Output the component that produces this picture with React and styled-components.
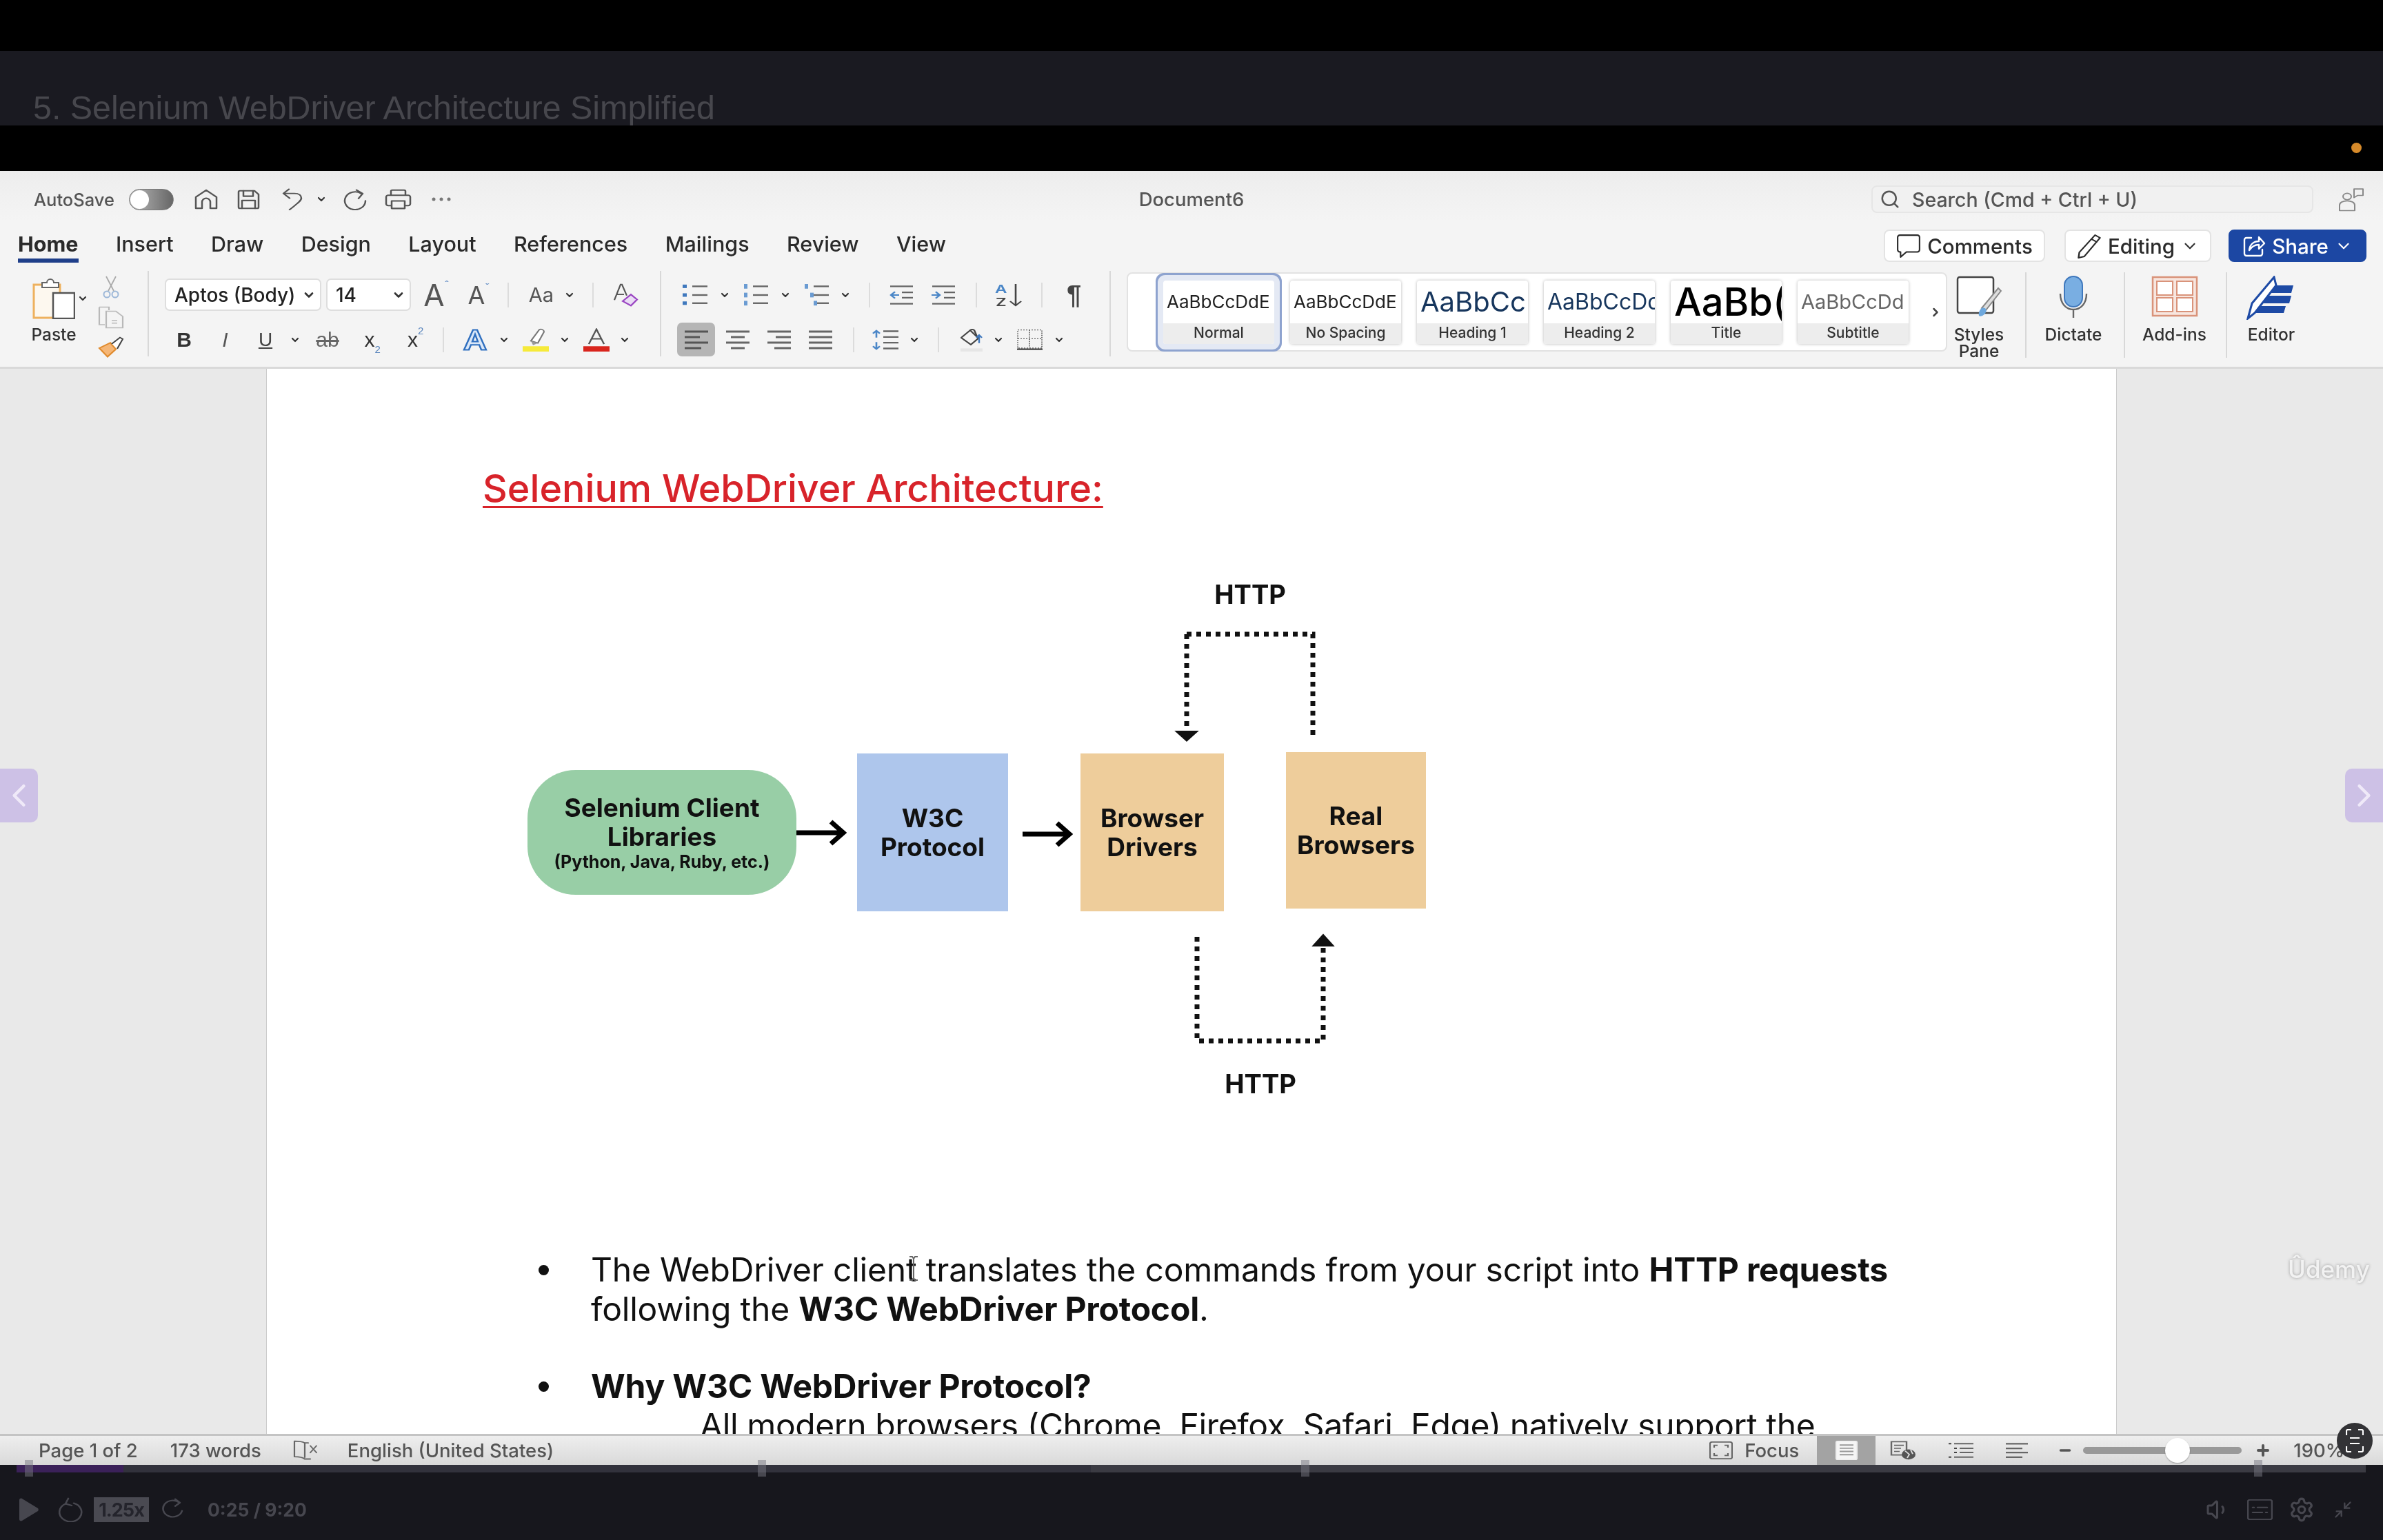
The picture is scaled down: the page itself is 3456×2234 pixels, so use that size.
import React from "react";
import styled, { createGlobalStyle } from "styled-components";
import { ChevronDown, ChevronRight, ChevronLeft, Search, Volume1, Settings, Minimize2, Minus, Plus } from "lucide-react";

const Global = createGlobalStyle`
  html, body { margin: 0; padding: 0; background: #000; }
  * { box-sizing: border-box; }
`;
const font = `Inter, "Liberation Sans", sans-serif`;

const App_ = styled.div`
  position: relative; width: 3456px; height: 2234px; overflow: hidden; background: #000;
  font-family: ${font}; display: flex; flex-direction: column; filter: blur(0.7px);
`;
const TopBlack = styled.div`height: 74px; background: #000; flex: none;`;
const TitleBar = styled.div`
  height: 108px; flex: none; background: #1a1a21; color: #47474d; font-size: 48.4px; padding: 56px 0 0 48px;
  line-height: 52px; font-family: "Liberation Sans", sans-serif; overflow: hidden; white-space: nowrap;
`;
const BlackBand = styled.div`height: 66px; flex: none; background: #000; position: relative;`;
const RecDot = styled.div`position: absolute; right: 31px; top: 25px; width: 15px; height: 15px; border-radius: 50%; background: #d68a2a;`;
const Word = styled.div`height: 1877px; flex: none; display: flex; flex-direction: column; background: #e9e9e9;`;
const Ribbon = styled.div`
  height: 287px; flex: none; background: linear-gradient(#ededed, #f4f4f4 25%); border-bottom: 3px solid #d9d9d9;
  display: flex; flex-direction: column; color: #333;
`;
const QuickRow = styled.div`height: 82px; flex: none; display: grid; grid-template-columns: 1fr auto 1fr; align-items: center;`;
const QuickLeft = styled.div`display: flex; align-items: center;`;
const QuickRight = styled.div`display: flex; align-items: center; justify-content: flex-end; padding-right: 26px;`;
const Slot = styled.span`
  display: inline-flex; align-items: center; justify-content: center; flex: none;
  width: ${p => p.$w}px; margin-left: ${p => p.$ml || 0}px; color: ${p => p.$c || "#555"};
`;
const AutoSave = styled.span`margin-left: 49px; font-size: 25.5px; color: #555; font-weight: 500; width: 116px; flex: none; white-space: nowrap;`;
const Toggle = styled.span`
  margin-left: 22px; width: 65px; height: 31px; border-radius: 16px; background: linear-gradient(90deg, #bbb, #666);
  flex: none; position: relative; display: block; border: 1px solid #777;
`;
const ToggleKnob = styled.span`position: absolute; left: 1px; top: 1px; width: 27px; height: 27px; border-radius: 50%; background: #fff;`;
const DocTitle = styled.div`font-size: 27.5px; color: #555; font-weight: 500;`;
const SearchBox = styled.div`
  width: 641px; height: 40px; background: #f1f1f1; border: 2px solid #e6e6e6; border-radius: 8px; display: flex; align-items: center;
  padding-left: 10px; gap: 17px; color: #555; font-size: 28.5px; font-weight: 500; white-space: nowrap;
`;
const TabRow = styled.div`height: 55px; flex: none; display: flex; align-items: flex-start; padding: 6px 24px 0 26px;`;
const Tabs = styled.div`display: flex; gap: 54.4px;`;
const Tab = styled.div`
  font-size: 30.5px; line-height: 36px; padding-bottom: 3px; color: #2a2a2a; font-weight: ${p => p.$on ? 700 : 500};
  border-bottom: 6px solid ${p => p.$on ? "#1f3f8a" : "transparent"}; white-space: nowrap;
`;
const RightBtns = styled.div`margin-left: auto; margin-top: -3px; display: flex;`;
const PillBtn = styled.div`
  width: ${p => p.$w}px; height: 47px; margin-left: ${p => p.$ml || 0}px; border-radius: 8px; display: flex; align-items: center; justify-content: center; gap: 9px;
  background: ${p => p.$blue ? "#1c47a3" : "#fff"}; color: ${p => p.$blue ? "#fff" : "#2a2a2a"};
  border: 2px solid ${p => p.$blue ? "#1c47a3" : "#e3e3e3"}; font-size: 29.5px; font-weight: 500;
`;
const Tools = styled.div`height: 127px; margin-top: 8px; flex: none; display: flex;`;
const GroupSep = styled.div`width: 2px; flex: none; background: #d8d8d8; height: 124px;`;
const PasteGroup = styled.div`width: 214px; flex: none; display: flex;`;
const PasteCol = styled.div`margin-left: 40px; width: 76px; display: flex; flex-direction: column; align-items: center; padding-top: 10px;`;
const PasteLabel = styled.div`font-size: 24.5px; line-height: 24px; margin-top: 10px; font-weight: 500; color: #333;`;
const PasteChev = styled.span`margin-left: -4px; width: 16px; height: 60px; margin-top: 10px; display: flex; align-items: center; justify-content: center; flex: none;`;
const ClipCol = styled.div`margin-left: 13px; display: flex; flex-direction: column; gap: 11px; padding-top: 7px; align-items: center; width: 39px;`;
const ToolGroup = styled.div`width: ${p => p.$w}px; flex: none; display: flex; flex-direction: column;`;
const ToolRow = styled.div`display: flex; align-items: center; height: 47px; margin-top: ${p => p.$mt || 11}px;`;
const MiniSep = styled.span`width: 2px; height: 36px; background: #dcdcdc; flex: none; margin-left: ${p => p.$ml}px;`;
const Select = styled.div`
  width: ${p => p.$w}px; height: 47px; margin-left: ${p => p.$ml}px; background: #fff; border: 2px solid #dedede; border-radius: 7px;
  display: flex; align-items: center; justify-content: space-between; padding: 0 6px 0 12px; font-size: 28px; color: #222; flex: none; font-weight: 500; white-space: nowrap;
`;
const GlyphA = styled.span`font-size: ${p => p.$s}px; color: #555; line-height: 1; position: relative; font-weight: 400;`;
const Sup = styled.span`position: absolute; left: 100%; top: 0; font-size: 14px; color: #6b93c8; font-weight: 700;`;
const Fmt = styled.span`
  font-size: ${p => p.$s || 28}px; color: ${p => p.$c || "#333"}; line-height: 1; font-family: "Liberation Sans", sans-serif;
  font-weight: ${p => p.$b ? 700 : 400}; font-style: ${p => p.$i ? "italic" : "normal"};
  text-decoration: ${p => p.$d || "none"}; position: relative;
`;
const Sub = styled.span`font-size: 15px; color: #5b86bd; position: absolute; left: 100%; ${p => p.$up ? "top:-6px;" : "bottom:-6px;"}`;
const ActiveBtn = styled.span`
  display: inline-flex; align-items: center; justify-content: center; flex: none; width: 55px; height: 49px; margin-left: ${p => p.$ml}px;
  background: #b5b5b5; border-radius: 7px;
`;
const Gallery = styled.div`
  margin-left: 23px; width: 1190px; height: 115px; margin-top: 2px; background: #fff; border: 2px solid #e2e2e2; border-radius: 8px; display: flex; align-items: center;
  padding-left: 51px; flex: none;
`;
const StyleCard = styled.div`
  width: 161px; height: 92px; margin-right: 23px; flex: none; border-radius: 4px; overflow: hidden; display: flex; flex-direction: column; background: #fff;
  box-shadow: ${p => p.$sel ? "0 0 0 8px #e4e9f4, 0 0 0 11px #8ea3cf" : "0 0 4px rgba(0,0,0,.28)"};
`;
const Preview = styled.div`
  flex: 1; display: flex; align-items: center; padding-left: 5px; overflow: hidden; white-space: nowrap;
  font-size: ${p => p.$s}px; color: ${p => p.$c || "#222"}; font-weight: ${p => p.$w || 400};
`;
const PreviewLabel = styled.div`height: 30px; background: #ededed; text-align: center; font-size: 21px; line-height: 28px; color: #333; font-weight: 500;`;
const GalleryMore = styled.div`margin-left: 6px; color: #444; display: flex;`;
const BigBtn = styled.div`width: ${p => p.$w}px; margin-left: ${p => p.$ml || 0}px; flex: none; display: flex; flex-direction: column; align-items: center; padding-top: 7px;`;
const BigIcon = styled.div`height: 60px; display: flex; justify-content: center;`;
const BigLabel = styled.div`margin-top: 13px; font-size: 24.5px; line-height: 24px; text-align: center; color: #333; font-weight: 500;`;
const Doc = styled.div`flex: 1; min-height: 0; overflow: hidden; display: flex; justify-content: center; background: #e9e9e9;`;
const Page = styled.div`width: 2684px; height: 100%; flex: none; background: #fff; border-left: 1px solid #ccc; border-right: 1px solid #ccc; padding-top: 138px; color: #111;`;
const Heading = styled.div`
  margin-left: 313px; font-size: 55.5px; line-height: 70px; color: #d8232a; font-weight: 500; text-decoration: underline; text-decoration-thickness: 3px; text-underline-offset: 6px; white-space: nowrap;
`;
const Canvas = styled.div`position: relative; height: 1070px;`;
const Node = styled.div`
  position: absolute; left: ${p => p.$x}px; top: ${p => p.$y}px; width: ${p => p.$w}px; height: ${p => p.$h}px; background: ${p => p.$bg};
  border-radius: ${p => p.$r || 0}px; display: flex; flex-direction: column; align-items: center; justify-content: center; text-align: center;
  font-size: 37px; font-weight: 700; line-height: 42px; color: #111;
`;
const NodeSmall = styled.div`font-size: 25px; line-height: 30px;`;
const HttpLabel = styled.div`position: absolute; left: ${p => p.$x}px; top: ${p => p.$y}px; transform: translate(-50%, -50%); font-size: 38px; font-weight: 700; color: #111;`;
const Lines = styled.svg`position: absolute; left: 0; top: 0; width: 2684px; height: 1070px;`;
const List = styled.div`padding-left: 470px; font-size: 48px; line-height: 57px; letter-spacing: -0.2px; color: #111;`;
const Item = styled.div`
  position: relative; margin-bottom: ${p => p.$mb || 0}px; white-space: nowrap;
  &::before { content: ""; position: absolute; left: -76px; top: 22px; width: 15px; height: 15px; border-radius: 50%; background: #111; }
`;
const SubLine = styled.div`padding-left: 158px; white-space: nowrap; letter-spacing: -0.4px;`;
const Status = styled.div`
  height: 45px; flex: none; background: linear-gradient(#eee, #d9d9d9); border-top: 3px solid #c4c4c4; display: flex; align-items: center; color: #555; font-size: 27.5px; font-weight: 500; position: relative;
`;
const StatusText = styled.span`margin-left: ${p => p.$ml}px; white-space: nowrap; flex: none;`;
const ViewActive = styled.span`
  margin-left: ${p => p.$ml}px; width: 85px; height: 42px; background: #a3a3a3; display: flex; align-items: center; justify-content: center; flex: none;
`;
const SliderTrack = styled.div`margin-left: ${p => p.$ml}px; width: 230px; height: 10px; border-radius: 5px; background: #999; position: relative; flex: none;`;
const SliderThumb = styled.div`position: absolute; left: 119px; top: -13px; width: 36px; height: 36px; border-radius: 50%; background: #fff; box-shadow: 0 1px 2px rgba(0,0,0,.3);`;
const ProgressWrap = styled.div`height: 11px; flex: none; background: #17171d; padding: 0 24px; display: flex;`;
const ProgressFill = styled.div`width: 155px; background: #3b2159;`;
const ProgressRest = styled.div`width: ${p => p.$w}px; background: ${p => p.$c};`;
const Tick = styled.div`position: absolute; left: ${p => p.$x}px; top: 2118px; width: 12px; height: 24px; background: rgba(120,120,130,.5);`;
const Player = styled.div`flex: 1; background: #17171d; display: flex; align-items: center; padding-top: 10px; color: #47474f;`;
const Speed = styled.div`margin-left: 15px; width: 80px; height: 36px; background: #4a4a52; color: #24242c; font-size: 27px; font-weight: 700; display: flex; align-items: center; justify-content: center; letter-spacing: -1px;`;
const Time = styled.div`margin-left: 35px; font-size: 26.5px; font-weight: 700; color: #47474f;`;
const PlayerRight = styled.div`margin-left: auto; display: flex; align-items: center; padding-right: 44px;`;
const SideArrow = styled.div`
  position: absolute; top: 1115px; width: 55px; height: 78px; background: #cdc1e6; display: flex; align-items: center; justify-content: center; color: #efe9f8;
  ${p => p.$right ? "right: 0; border-radius: 10px 0 0 10px;" : "left: 0; border-radius: 0 10px 10px 0;"}
`;
const Watermark = styled.div`position: absolute; left: 3318px; top: 1818px; font-size: 35px; font-weight: 500; color: #f2f2f2; text-shadow: 0 0 4px #999; line-height: 46px;`;
const Badge = styled.div`position: absolute; left: 3389px; top: 2064px; width: 52px; height: 52px; border-radius: 50%; background: #333336; display: flex; align-items: center; justify-content: center;`;
const Cursor = styled.svg`position: absolute; left: 1318px; top: 1822px;`;

const Chev = ({ s = 20, c = "#333", w = 3.2 }) => <ChevronDown size={s} color={c} strokeWidth={w} />;
const S = (p) => <svg fill="none" stroke="currentColor" strokeWidth="2.5" strokeLinecap="round" strokeLinejoin="round" preserveAspectRatio="none" {...p} />;

const Home = () => <S width="36" height="30" viewBox="0 0 36 33"><path d="M3 31V13L18 2l15 11v18h-9V21a6 6 0 0 0-12 0v10z" /></S>;
const Save = () => <S width="33" height="29" viewBox="0 0 33 33"><path d="M2 4a2 2 0 0 1 2-2h21l6 6v21a2 2 0 0 1-2 2H4a2 2 0 0 1-2-2z" /><path d="M9 2v9h14V2M7 31V18h19v13" /></S>;
const Undo = () => <S width="32" height="32" viewBox="0 0 32 42"><path d="M11 2 3 10l9 9M3 10h16c7 0 10 4 10 9 0 6-10 14-17 22" /></S>;
const Redo = () => <S width="34" height="31" viewBox="0 0 34 36"><path d="M26 8A15 15 0 1 0 32 20M19 2l9 6-6 8" /></S>;
const Printer = () => <S width="39" height="30" viewBox="0 0 39 36"><path d="M9 11V4a2 2 0 0 1 2-2h17a2 2 0 0 1 2 2v7M9 29H5a3 3 0 0 1-3-3V14a3 3 0 0 1 3-3h29a3 3 0 0 1 3 3v12a3 3 0 0 1-3 3h-4" /><path d="M10 21h19v13H10z" /></S>;
const Dots = () => <svg width="30" height="8" viewBox="0 0 30 8" fill="#777"><circle cx="4" cy="4" r="2.5" /><circle cx="15" cy="4" r="2.5" /><circle cx="26" cy="4" r="2.5" /></svg>;
const Person = () => <S width="40" height="36" viewBox="0 0 40 46" stroke="#888" strokeWidth="2"><circle cx="14" cy="18" r="6" /><path d="M3 44V34c0-5 5-8 11-8s11 3 11 8v10z" /><path d="M24 4h13v12h-8l-5 4z" /></S>;
const Comment = () => <S width="36" height="36" viewBox="0 0 34 34" strokeWidth="2"><path d="M5 2h24a3 3 0 0 1 3 3v17a3 3 0 0 1-3 3H14l-8 7v-7H5a3 3 0 0 1-3-3V5a3 3 0 0 1 3-3z" /></S>;
const Pencil = () => <S width="36" height="36" viewBox="0 0 30 36" strokeWidth="2"><path d="M22 2l6 4L9 33l-7 2 1-8zM18 8l6 4" /></S>;
const ShareIc = () => <S width="34" height="34" viewBox="0 0 34 34" strokeWidth="2.4"><path d="M13 5H6a3 3 0 0 0-3 3v20a3 3 0 0 0 3 3h20a3 3 0 0 0 3-3v-6" /><path d="M10 23c1-9 7-13 14-13V4l8 9-8 8v-6c-6 0-10 2-14 8z" /></S>;

const PasteIc = () => <svg width="62" height="60" viewBox="0 0 62 60" fill="none"><path d="M12 10h28v48H2V10z" stroke="#eeb15e" strokeWidth="3" fill="#fdf8ef" /><path d="M14 14V7h7a5 5 0 0 1 10 0h7v7z" stroke="#666" strokeWidth="2" fill="#fff" /><rect x="30" y="22" width="31" height="37" fill="#fff" stroke="#555" strokeWidth="2.5" /></svg>;
const ScissorsIc = () => <svg width="26" height="33" viewBox="0 0 26 33" fill="none"><path d="M6 1 17 22M20 1 9 22" stroke="#aaa" strokeWidth="1.8" /><circle cx="7" cy="27" r="4.5" stroke="#9db8d8" strokeWidth="2" /><circle cx="19" cy="27" r="4.5" stroke="#9db8d8" strokeWidth="2" /></svg>;
const CopyIc = () => <svg width="38" height="33" viewBox="0 0 38 44" fill="none" stroke="#b9b9b9" strokeWidth="2.2" preserveAspectRatio="none"><path d="M2 2h14v6M10 36H2V2" /><path d="M12 10h14l10 10v22H12z" /><path d="M20 28h8M20 33h8" /></svg>;
const BrushIc = () => <svg width="38" height="31" viewBox="0 0 38 40" fill="none" preserveAspectRatio="none"><path d="M2 22 18 12l8 12-12 14z" fill="#f5b676" stroke="#e08b2e" strokeWidth="2.4" /><path d="M20 14 32 2l4 3-8 18" fill="#fff" stroke="#444" strokeWidth="2.2" /></svg>;
const Eraser = () => <svg width="37" height="34" viewBox="0 0 37 42" fill="none" preserveAspectRatio="none"><path d="M2 30 11 2h2l7 20M5 20h11" stroke="#555" strokeWidth="2.2" /><path d="M14 32l12-12 9 9-9 11z" fill="#eadcf5" stroke="#9a45c2" strokeWidth="2.4" /></svg>;
const BlueA = () => <svg width="36" height="32" viewBox="0 0 36 40" preserveAspectRatio="none"><path d="M2 38 15 2h6l13 36h-7l-3-9H12l-3 9zM14 23h8l-4-13z" fill="#dbe8f8" stroke="#2f6fbf" strokeWidth="2.5" /></svg>;
const Marker = () => <svg width="38" height="34" viewBox="0 0 38 44" fill="none" preserveAspectRatio="none"><path d="M12 24 24 3c3-2 7 0 7 4L22 28z" stroke="#777" strokeWidth="2.2" fill="#fff" /><path d="M12 24l10 4-7 4z" fill="#999" /><rect x="0" y="34" width="38" height="10" fill="#f6ea3a" /></svg>;
const FontColorIc = () => <svg width="38" height="34" viewBox="0 0 38 44" fill="none" preserveAspectRatio="none"><path d="M8 30 19 2l11 28M12 20h14" stroke="#555" strokeWidth="2.4" /><rect x="0" y="34" width="38" height="10" fill="#d9251d" /></svg>;
const BulletList = ({ kind }) => {
  const lines = [4, 19, 33];
  return <svg width="36" height="32" viewBox="0 0 36 38" fill="none" preserveAspectRatio="none">
    {lines.map((y, i) => <path key={i} d={`M14 ${y}H36`} stroke="#666" strokeWidth="2.8" />)}
    {kind === "b" && lines.map((y, i) => <rect key={i} x="0" y={y - 3} width="6" height="6" fill="#3f78bd" />)}
    {kind === "n" && lines.map((y, i) => <rect key={i} x="1" y={y - 4} width="5" height="8" fill="#6a9bd2" />)}
    {kind === "m" && [[1, 4], [9, 19], [14, 33]].map(([x, y], i) => <rect key={i} x={x} y={y - 4} width="5" height="8" fill="#6a9bd2" />)}
  </svg>;
};
const IndentIc = ({ out }) => <svg width="34" height="30" viewBox="0 0 34 38" fill="none" preserveAspectRatio="none"><path d="M1 3h33M1 35h33M18 14h16M18 24h16" stroke="#666" strokeWidth="2.8" /><path d={out ? "M14 19H2M8 13l-6 6 6 6" : "M0 19h12M6 13l6 6-6 6"} stroke="#4a86c7" strokeWidth="2.6" /></svg>;
const SortIc = () => <svg width="39" height="36" viewBox="0 0 39 52" fill="none" preserveAspectRatio="none"><text x="0" y="22" fontSize="24" fontWeight="600" fill="#4a86c7" fontFamily="Inter">A</text><text x="1" y="49" fontSize="24" fontWeight="600" fill="#444" fontFamily="Inter">Z</text><path d="M30 3v45M22 39l8 9 8-9" stroke="#444" strokeWidth="2.6" /></svg>;
const AlignIc = ({ a, dark }) => {
  const c = dark ? "#555" : "#666";
  const rows = a === "l" ? [[0, 34], [0, 22], [0, 34], [0, 24]] : a === "c" ? [[0, 34], [7, 20], [0, 34], [7, 20]] : a === "r" ? [[0, 34], [12, 22], [0, 34], [10, 24]] : [[0, 34], [0, 34], [0, 34], [0, 34]];
  return <svg width="34" height="30" viewBox="0 0 34 30" fill="none">{rows.map(([x, w], i) => <path key={i} d={`M${x} ${3 + i * 8}h${w}`} stroke={c} strokeWidth="3" />)}</svg>;
};
const LineSp = () => <svg width="38" height="30" viewBox="0 0 38 36" fill="none" preserveAspectRatio="none"><path d="M16 3h22M16 13h22M16 23h22M16 33h22" stroke="#666" strokeWidth="2.8" /><path d="M6 14V2M1 7l5-5 5 5M6 22v12M1 29l5 5 5-5" stroke="#4a86c7" strokeWidth="2.6" /></svg>;
const FillIc = () => <svg width="32" height="34" viewBox="0 0 32 44" fill="none" preserveAspectRatio="none"><path d="M1 18 14 4l12 15-11 12z" stroke="#444" strokeWidth="2.4" /><path d="M14 4c2-2 4-2 6 0l4 12" stroke="#444" strokeWidth="2.4" /><path d="M27 28V14M23 18l4-5 4 5" stroke="#3f78bd" strokeWidth="2.4" /><rect x="0" y="38" width="32" height="6" fill="#e6e6e6" /></svg>;
const Borders = () => <svg width="37" height="32" viewBox="0 0 37 40" fill="none" preserveAspectRatio="none"><path d="M1 2h35v33H1zM18 2v33M1 18h35" stroke="#666" strokeWidth="1.8" strokeDasharray="2 2" /><path d="M0 37h37" stroke="#444" strokeWidth="3" /></svg>;
const StylesPaneIc = () => <svg width="68" height="62" viewBox="0 0 68 62" fill="none"><path d="M6 2h46a3 3 0 0 1 3 3v46a3 3 0 0 1-3 3H6a3 3 0 0 1-3-3V5a3 3 0 0 1 3-3z" stroke="#444" strokeWidth="2.5" fill="#fff" /><path d="M66 22 44 50l-6-3 24-29z" fill="#ddd" stroke="#888" strokeWidth="2" /><path d="M38 47c5-2 8 2 6 6s-7 7-10 5c-1-4 1-9 4-11z" fill="#6ea8dd" /></svg>;
const MicIc = () => <svg width="42" height="62" viewBox="0 0 42 62" fill="none"><rect x="8" y="1" width="26" height="44" rx="13" fill="#79aee2" stroke="#3f78bd" strokeWidth="2" /><path d="M2 26c0 14 8 23 19 23s19-9 19-23M21 49v12" stroke="#666" strokeWidth="2.4" /></svg>;
const AddinsIc = () => <svg width="68" height="60" viewBox="0 0 68 60" fill="none"><rect x="2" y="2" width="64" height="56" fill="#f7e6df" stroke="#d9937a" strokeWidth="2.5" /><rect x="8" y="8" width="23" height="20" fill="#fff" stroke="#d9937a" strokeWidth="2" /><rect x="37" y="8" width="23" height="20" fill="#fff" stroke="#d9937a" strokeWidth="2" /><rect x="8" y="32" width="23" height="20" fill="#fff" stroke="#d9937a" strokeWidth="2" /><rect x="37" y="32" width="23" height="20" fill="#fff" stroke="#d9937a" strokeWidth="2" /></svg>;
const EditorIc = () => <svg width="72" height="64" viewBox="0 0 72 64" fill="none"><path d="M2 62 8 40 40 2l3 12-31 40z" fill="#fff" stroke="#1d4aa5" strokeWidth="3" /><path d="M42 14h26l-3 11H33zM31 29h34l-3 11H21zM19 44h38l-3 10H11z" fill="#1d4aa5" /></svg>;
const BookX = () => <S width="38" height="30" viewBox="0 0 38 36" strokeWidth="2.2" stroke="#666"><path d="M18 30V5c-3-2-8-3-15-3v27c7 0 12 1 15 4h8M18 5h5" /><path d="M26 10l9 12M35 10l-9 12" strokeWidth="2" /></S>;
const FocusIc = () => <svg width="34" height="26" viewBox="0 0 34 32" fill="none" stroke="#666" strokeWidth="2.2" preserveAspectRatio="none"><rect x="1" y="1" width="32" height="30" rx="3" /><path d="M7 11V7h5M27 11V7h-5M7 21v4h5M27 21v4h-5" /></svg>;
const PrintLayout = () => <svg width="32" height="28" viewBox="0 0 32 36" fill="none" preserveAspectRatio="none"><rect x="1" y="1" width="30" height="34" rx="2" fill="#f5f5f5" stroke="#eee" strokeWidth="2" /><path d="M6 8h20M6 14h20M6 20h20M6 26h20" stroke="#999" strokeWidth="2.4" /></svg>;
const WebIc = () => <svg width="38" height="28" viewBox="0 0 38 38" fill="none" preserveAspectRatio="none"><path d="M2 2h22v26H2z" stroke="#666" strokeWidth="2.4" /><path d="M6 9h14M6 15h10M6 21h8" stroke="#666" strokeWidth="2.2" /><circle cx="27" cy="27" r="10" fill="#555" /><path d="M22 20l6 7-3 7M30 18l3 8" stroke="#ddd" strokeWidth="2" /></svg>;
const OutlineIc = () => <svg width="36" height="24" viewBox="0 0 36 32" fill="none" preserveAspectRatio="none"><path d="M8 3h28M16 12h20M16 20h20M8 29h28" stroke="#666" strokeWidth="2.8" /><path d="M0 3h4M8 12h4M8 20h4M0 29h4" stroke="#444" strokeWidth="2.8" /></svg>;
const DraftIc = () => <svg width="32" height="24" viewBox="0 0 32 32" fill="none" preserveAspectRatio="none"><path d="M0 3h32M0 12h24M0 20h32M0 29h24" stroke="#666" strokeWidth="3" /></svg>;
const ScanIc = () => <svg width="26" height="34" viewBox="0 0 26 34" fill="none" stroke="#fff" strokeWidth="2.2"><path d="M1 9V3a2 2 0 0 1 2-2h5M25 9V3a2 2 0 0 0-2-2h-5M1 25v6a2 2 0 0 0 2 2h5M25 25v6a2 2 0 0 1-2 2h-5M6 13h14M6 21h14" /></svg>;
const PlayIc = () => <svg width="28" height="34" viewBox="0 0 28 34" fill="#47474f"><path d="M0 3c0-2 2-3 4-2l23 14c1 1 1 3 0 4L4 33c-2 1-4 0-4-2z" /></svg>;
const BackIc = () => <S width="36" height="36" viewBox="0 0 36 42" stroke="#47474f" strokeWidth="2.6"><path d="M14 2 10 11l9 3" /><path d="M10 11a16 16 0 1 0 12-1" /></S>;
const FwdIc = () => <S width="32" height="34" viewBox="0 0 32 40" stroke="#47474f" strokeWidth="2.6"><path d="M26 8A14 14 0 1 0 30 22M20 2l7 6-7 6" /></S>;
const CaptionIc = () => <S width="37" height="30" viewBox="0 0 37 38" stroke="#47474f" strokeWidth="2.6"><rect x="1" y="1" width="35" height="36" rx="3" /><path d="M8 15h2M15 15h14M8 24h14M27 24h2" /></S>;

export default function App() {
  return (
    <App_>
      <Global />
      <TopBlack />
      <TitleBar>5. Selenium WebDriver Architecture Simplified</TitleBar>
      <BlackBand><RecDot /></BlackBand>
      <Word>
        <Ribbon>
          <QuickRow>
            <QuickLeft>
              <AutoSave>AutoSave</AutoSave>
              <Toggle><ToggleKnob /></Toggle>
              <Slot $w={36} $ml={29}><Home /></Slot>
              <Slot $w={33} $ml={27}><Save /></Slot>
              <Slot $w={32} $ml={31}><Undo /></Slot>
              <Slot $w={16} $ml={18}><Chev s={18} /></Slot>
              <Slot $w={34} $ml={24}><Redo /></Slot>
              <Slot $w={39} $ml={26}><Printer /></Slot>
              <Slot $w={30} $ml={28}><Dots /></Slot>
            </QuickLeft>
            <DocTitle>Document6</DocTitle>
            <QuickRight>
              <SearchBox><Search size={30} color="#555" strokeWidth={2} />Search (Cmd + Ctrl + U)</SearchBox>
              <Slot $w={40} $ml={35}><Person /></Slot>
            </QuickRight>
          </QuickRow>
          <TabRow>
            <Tabs>
              <Tab $on>Home</Tab><Tab>Insert</Tab><Tab>Draw</Tab><Tab>Design</Tab><Tab>Layout</Tab><Tab>References</Tab><Tab>Mailings</Tab><Tab>Review</Tab><Tab>View</Tab>
            </Tabs>
            <RightBtns>
              <PillBtn $w={234}><Comment />Comments</PillBtn>
              <PillBtn $w={213} $ml={28}><Pencil />Editing<Chev s={26} w={2} /></PillBtn>
              <PillBtn $w={200} $ml={25} $blue><ShareIc />Share<Chev s={26} w={2} c="#fff" /></PillBtn>
            </RightBtns>
          </TabRow>
          <Tools>
            <PasteGroup>
              <PasteCol><PasteIc /><PasteLabel>Paste</PasteLabel></PasteCol>
              <PasteChev><Chev /></PasteChev>
              <ClipCol>
                <ScissorsIc />
                <CopyIc />
                <BrushIc />
              </ClipCol>
            </PasteGroup>
            <GroupSep />
            <ToolGroup $w={741}>
              <ToolRow>
                <Select $w={227} $ml={23}>Aptos (Body)<Chev /></Select>
                <Select $w={123} $ml={7}>14<Chev /></Select>
                <Slot $w={33} $ml={17}><GlyphA $s={44}>A<Sup>ˆ</Sup></GlyphA></Slot>
                <Slot $w={30} $ml={30}><GlyphA $s={36}>A<Sup>ˇ</Sup></GlyphA></Slot>
                <MiniSep $ml={30} />
                <Slot $w={38} $ml={28}><GlyphA $s={29}>Aa</GlyphA></Slot>
                <Slot $w={16} $ml={14}><Chev /></Slot>
                <MiniSep $ml={25} />
                <Slot $w={37} $ml={28}><Eraser /></Slot>
              </ToolRow>
              <ToolRow $mt={18}>
                <Slot $w={20} $ml={41}><Fmt $b $s={30}>B</Fmt></Slot>
                <Slot $w={15} $ml={42}><Fmt $i $s={30} $c="#555">I</Fmt></Slot>
                <Slot $w={22} $ml={40}><Fmt $d="underline" $s={28} $c="#444">U</Fmt></Slot>
                <Slot $w={16} $ml={24}><Chev /></Slot>
                <Slot $w={36} $ml={21}><Fmt $d="line-through" $s={30} $c="#666">ab</Fmt></Slot>
                <Slot $w={20} $ml={33}><Fmt $s={30}>x<Sub>2</Sub></Fmt></Slot>
                <Slot $w={25} $ml={40}><Fmt $s={30}>x<Sub $up>2</Sub></Fmt></Slot>
                <MiniSep $ml={31} />
                <Slot $w={36} $ml={27}><BlueA /></Slot>
                <Slot $w={16} $ml={16}><Chev /></Slot>
                <Slot $w={38} $ml={19}><Marker /></Slot>
                <Slot $w={16} $ml={15}><Chev /></Slot>
                <Slot $w={38} $ml={19}><FontColorIc /></Slot>
                <Slot $w={16} $ml={14}><Chev /></Slot>
              </ToolRow>
            </ToolGroup>
            <GroupSep />
            <ToolGroup $w={650}>
              <ToolRow>
                <Slot $w={36} $ml={31}><BulletList kind="b" /></Slot>
                <Slot $w={16} $ml={17}><Chev /></Slot>
                <Slot $w={36} $ml={19}><BulletList kind="n" /></Slot>
                <Slot $w={16} $ml={17}><Chev /></Slot>
                <Slot $w={37} $ml={18}><BulletList kind="m" /></Slot>
                <Slot $w={16} $ml={16}><Chev /></Slot>
                <MiniSep $ml={26} />
                <Slot $w={34} $ml={28}><IndentIc out /></Slot>
                <Slot $w={34} $ml={27}><IndentIc /></Slot>
                <MiniSep $ml={30} />
                <Slot $w={39} $ml={26}><SortIc /></Slot>
                <MiniSep $ml={28} />
                <Slot $w={25} $ml={33}><Fmt $s={38} $b $c="#444">¶</Fmt></Slot>
              </ToolRow>
              <ToolRow $mt={18}>
                <ActiveBtn $ml={23}><AlignIc a="l" dark /></ActiveBtn>
                <Slot $w={34} $ml={16}><AlignIc a="c" /></Slot>
                <Slot $w={34} $ml={26}><AlignIc a="r" /></Slot>
                <Slot $w={34} $ml={26}><AlignIc a="j" /></Slot>
                <MiniSep $ml={30} />
                <Slot $w={38} $ml={26}><LineSp /></Slot>
                <Slot $w={16} $ml={15}><Chev /></Slot>
                <MiniSep $ml={26} />
                <Slot $w={32} $ml={31}><FillIc /></Slot>
                <Slot $w={16} $ml={15}><Chev /></Slot>
                <Slot $w={37} $ml={19}><Borders /></Slot>
                <Slot $w={16} $ml={16}><Chev /></Slot>
              </ToolRow>
            </ToolGroup>
            <GroupSep />
            <Gallery>
              <StyleCard $sel><Preview $s={26}>AaBbCcDdE</Preview><PreviewLabel>Normal</PreviewLabel></StyleCard>
              <StyleCard><Preview $s={26}>AaBbCcDdE</Preview><PreviewLabel>No Spacing</PreviewLabel></StyleCard>
              <StyleCard><Preview $s={40} $c="#17365d">AaBbCc</Preview><PreviewLabel>Heading 1</PreviewLabel></StyleCard>
              <StyleCard><Preview $s={32} $c="#17365d">AaBbCcDd</Preview><PreviewLabel>Heading 2</PreviewLabel></StyleCard>
              <StyleCard><Preview $s={56} $c="#000" $w={500}>AaBb(</Preview><PreviewLabel>Title</PreviewLabel></StyleCard>
              <StyleCard><Preview $s={29} $c="#666">AaBbCcDd</Preview><PreviewLabel>Subtitle</PreviewLabel></StyleCard>
              <GalleryMore><ChevronRight size={20} strokeWidth={3} /></GalleryMore>
            </Gallery>
            <BigBtn $w={92}><BigIcon><StylesPaneIc /></BigIcon><BigLabel>Styles<br />Pane</BigLabel></BigBtn>
            <Slot $w={2} $ml={21}><GroupSep /></Slot>
            <BigBtn $w={136}><BigIcon><MicIc /></BigIcon><BigLabel>Dictate</BigLabel></BigBtn>
            <Slot $w={2} $ml={5}><GroupSep /></Slot>
            <BigBtn $w={143}><BigIcon><AddinsIc /></BigIcon><BigLabel>Add-ins</BigLabel></BigBtn>
            <Slot $w={2} $ml={3}><GroupSep /></Slot>
            <BigBtn $w={128}><BigIcon><EditorIc /></BigIcon><BigLabel>Editor</BigLabel></BigBtn>
          </Tools>
        </Ribbon>
        <Doc>
          <Page>
            <Heading>Selenium WebDriver Architecture:</Heading>
            <Canvas>
              <Lines viewBox="0 0 2684 1070" fill="none">
                <path d="M1334 177H1517V327" stroke="#111" strokeWidth="7" strokeDasharray="7 7" />
                <path d="M1334 177V315" stroke="#111" strokeWidth="7" strokeDasharray="7 7" />
                <path d="M1324 320L1334 329L1344 320Z" stroke="#111" strokeWidth="6" fill="#111" />
                <path d="M1349 616V767H1532V630" stroke="#111" strokeWidth="7" strokeDasharray="7 7" />
                <path d="M1522 627L1532 616L1542 627Z" stroke="#111" strokeWidth="6" fill="#111" />
                <path d="M768 465H834M818 449L836 465L818 481" stroke="#000" strokeWidth="7" />
                <path d="M1096 467H1162M1146 451L1164 467L1146 483" stroke="#000" strokeWidth="7" />
              </Lines>
              <Node $x={378} $y={374} $w={390} $h={181} $r={70} $bg="#98cea6">
                Selenium Client<br />Libraries<NodeSmall>(Python, Java, Ruby, etc.)</NodeSmall>
              </Node>
              <Node $x={856} $y={350} $w={219} $h={229} $bg="#aec6ec">W3C<br />Protocol</Node>
              <Node $x={1180} $y={350} $w={208} $h={229} $bg="#eecd9b">Browser<br />Drivers</Node>
              <Node $x={1478} $y={348} $w={203} $h={227} $bg="#eecd9b">Real<br />Browsers</Node>
              <HttpLabel $x={1426} $y={119}>HTTP</HttpLabel>
              <HttpLabel $x={1441} $y={829}>HTTP</HttpLabel>
            </Canvas>
            <List>
              <Item $mb={55}>The WebDriver client translates the commands from your script into <b>HTTP requests</b><br />following the <b>W3C WebDriver Protocol</b>.</Item>
              <Item><b>Why W3C WebDriver Protocol?</b></Item>
              <SubLine>All modern browsers (Chrome, Firefox, Safari, Edge) natively support the</SubLine>
            </List>
          </Page>
        </Doc>
        <Status>
          <StatusText $ml={56}>Page 1 of 2</StatusText>
          <StatusText $ml={47}>173 words</StatusText>
          <Slot $w={38} $ml={45}><BookX /></Slot>
          <StatusText $ml={42}>English (United States)</StatusText>
          <Slot $w={34} $ml={1676}><FocusIc /></Slot>
          <StatusText $ml={17}>Focus</StatusText>
          <ViewActive $ml={26}><PrintLayout /></ViewActive>
          <Slot $w={38} $ml={21}><WebIc /></Slot>
          <Slot $w={36} $ml={47}><OutlineIc /></Slot>
          <Slot $w={32} $ml={47}><DraftIc /></Slot>
          <Slot $w={22} $ml={43} $c="#555"><Minus size={24} strokeWidth={4} /></Slot>
          <SliderTrack $ml={15}><SliderThumb /></SliderTrack>
          <Slot $w={24} $ml={19} $c="#555"><Plus size={24} strokeWidth={4} /></Slot>
          <StatusText $ml={32}>190%</StatusText>
        </Status>
      </Word>
      <ProgressWrap>
        <ProgressFill />
        <ProgressRest $w={1403} $c="#32323c" />
        <ProgressRest $w={1849} $c="#3b3b43" />
      </ProgressWrap>
      <Player>
        <Slot $w={28} $ml={28} $c="#47474f"><PlayIc /></Slot>
        <Slot $w={36} $ml={29}><BackIc /></Slot>
        <Speed>1.25x</Speed>
        <Slot $w={32} $ml={18}><FwdIc /></Slot>
        <Time>0:25 / 9:20</Time>
        <PlayerRight>
          <Slot $w={36}><Volume1 size={38} color="#47474f" strokeWidth={2} /></Slot>
          <Slot $w={37} $ml={24}><CaptionIc /></Slot>
          <Slot $w={38} $ml={23}><Settings size={40} color="#47474f" strokeWidth={2} /></Slot>
          <Slot $w={28} $ml={27}><Minimize2 size={30} color="#47474f" strokeWidth={2} /></Slot>
        </PlayerRight>
      </Player>
      <Tick $x={36} /><Tick $x={1099} /><Tick $x={1887} /><Tick $x={3269} />
      <SideArrow><ChevronLeft size={56} strokeWidth={2} /></SideArrow>
      <SideArrow $right><ChevronRight size={56} strokeWidth={2} /></SideArrow>
      <Watermark>Ûdemy</Watermark>
      <Badge><ScanIc /></Badge>
      <Cursor width="14" height="36" viewBox="0 0 14 36" fill="none" stroke="#666" strokeWidth="2"><path d="M1 1h4l2 3 2-3h4M7 4v28M1 35h4l2-3 2 3h4" /></Cursor>
    </App_>
  );
}
